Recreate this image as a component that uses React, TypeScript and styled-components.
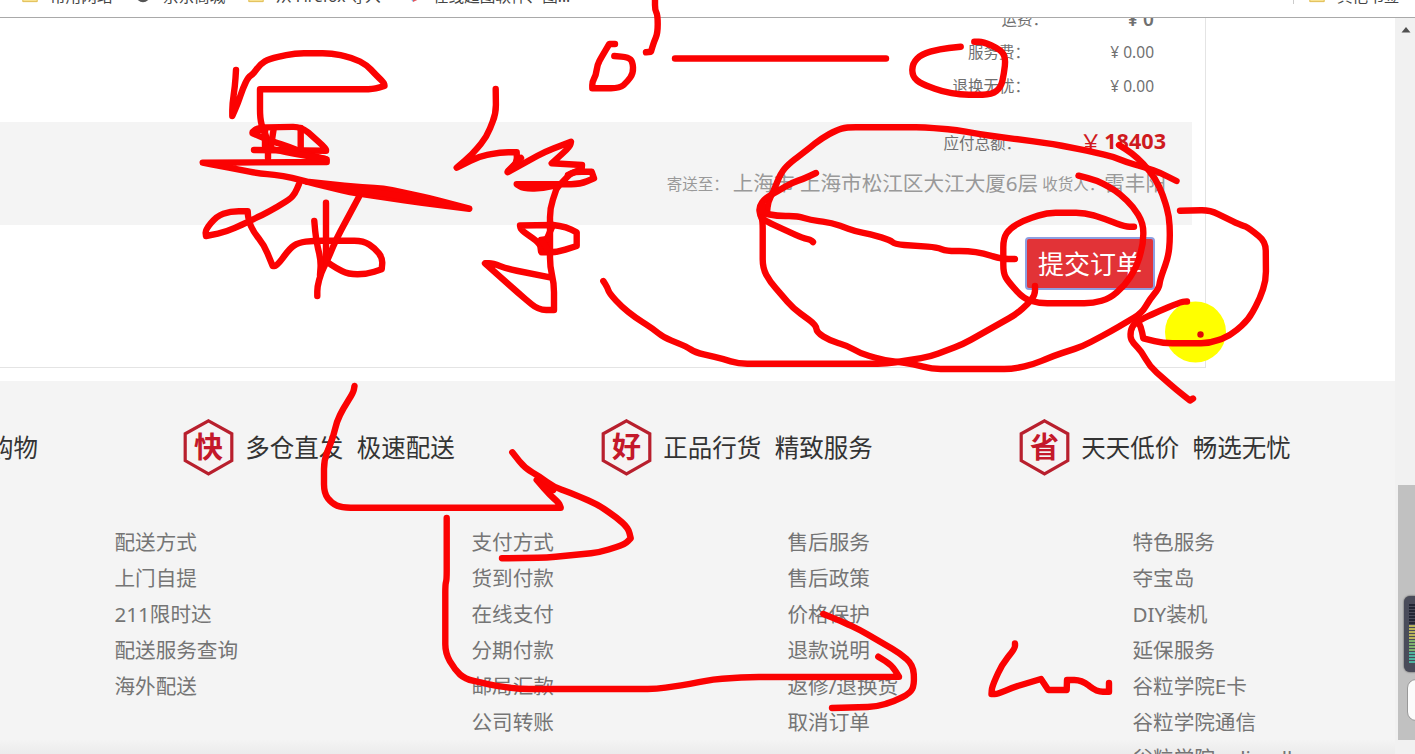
import React from 'react';
import styled, { createGlobalStyle } from 'styled-components';

const Global = createGlobalStyle`
  * { box-sizing: border-box; }
  body {
    margin: 0;
    overflow: hidden;
    background: #fff;
    font-family: 'Noto Sans', 'Noto Sans CJK SC', sans-serif;
    color: #707070;
  }
`;

const Screen = styled.div`
  position: relative;
  display: flex;
  flex-direction: column;
  width: 1415px;
  height: 754px;
  overflow: hidden;
`;

const BookmarkBar = styled.div`
  display: flex;
  align-items: flex-start;
  flex: none;
  height: 18px;
  border-bottom: 1px solid #a9a9a9;
  background: #fff;
`;

const Bookmark = styled.div<{ $start: number; $width: number }>`
  display: flex;
  flex: none;
  width: ${(p) => p.$width}px;
  margin-left: ${(p) => p.$start}px;
  margin-top: -14px;
  height: 20px;
  gap: 12px;
  font-size: 15.6px;
  line-height: 20px;
  color: #444;
  white-space: nowrap;
`;

const BookmarkIcon = styled.svg`
  flex: none;
  width: 16px;
  height: 19px;
  margin-top: -1px;
`;

const BarDivider = styled.i`
  width: 1px;
  height: 4px;
  margin-left: 724px;
  background: #ccc;
`;

const Viewport = styled.div`
  display: flex;
  flex: 1;
  min-height: 0;
`;

const Page = styled.main`
  display: flex;
  flex-direction: column;
  width: 1395px;
  overflow: hidden;
`;

const OrderCard = styled.section`
  flex: none;
  width: 1206px;
  height: 350px;
  margin-bottom: 13px;
  border-right: 1px solid #e4e4e4;
  border-bottom: 1px solid #e4e4e4;
`;

const FeeList = styled.div`
  display: flex;
  flex-direction: column;
  height: 104px;
  padding-right: 51px;
  overflow: hidden;
`;

const FeeRow = styled.div`
  display: flex;
  justify-content: flex-end;
  flex: none;
  height: 33.4px;
  font-size: 15.5px;
  line-height: 33.4px;

  &:first-child { margin-top: -15px; }
`;

const FeeValue = styled.span<{ $width?: number; $strong?: boolean }>`
  width: ${(p) => p.$width ?? 124}px;
  text-align: right;
  font-size: ${(p) => (p.$strong ? 19 : 15.5)}px;
  font-weight: ${(p) => (p.$strong ? 600 : 400)};
`;

const TotalBand = styled.div`
  display: flex;
  flex-direction: column;
  width: 1192px;
  height: 103px;
  padding: 0 26px 0 0;
  background: #f4f4f4;
`;

const TotalRow = styled.div`
  display: flex;
  justify-content: flex-end;
  height: 41px;
  line-height: 42px;
  font-size: 15.5px;
`;

const TotalAmount = styled.strong`
  display: flex;
  justify-content: flex-end;
  width: 145px;
  line-height: 38px;
  font-size: 21.6px;
  font-weight: 700;
  color: #cf1a1e;
`;

const Yen = styled.span`
  margin-right: 2px;
  font-family: 'Noto Sans CJK SC', sans-serif;
  font-size: 23px;
  font-weight: 400;
`;

const ShipRow = styled.div`
  display: flex;
  justify-content: flex-end;
  height: 40px;
  line-height: 40px;
  color: #999;
  white-space: nowrap;
`;

const ShipLabel = styled.span<{ $gap: number }>`
  margin-right: ${(p) => p.$gap}px;
  font-size: 15.5px;
  line-height: 42px;
`;

const ShipValue = styled.span<{ $gap?: number }>`
  margin-right: ${(p) => p.$gap ?? 0}px;
  font-size: 20.6px;
`;

const SubmitRow = styled.div`
  display: flex;
  justify-content: flex-end;
  padding: 12px 50px 0 0;
`;

const SubmitButton = styled.button`
  width: 130px;
  height: 53px;
  padding: 0 0 1px;
  border: 2px solid #8e9fe0;
  border-radius: 4px;
  background: #e23337;
  color: #fff;
  font-family: 'Noto Sans CJK SC', sans-serif;
  font-size: 26px;
  line-height: 48px;
`;

const Footer = styled.footer`
  flex: 1;
  background: linear-gradient(#f4f4f4 0 358px, #ececec 372px);
`;

const Features = styled.div`
  display: flex;
  height: 132px;
`;

const Feature = styled.div<{ $width: number }>`
  display: flex;
  align-items: center;
  justify-content: flex-start;
  flex: none;
  gap: 11px;
  width: ${(p) => p.$width}px;
  white-space: nowrap;
`;

const ClippedFeature = styled(Feature)`
  justify-content: flex-end;
  margin-right: 145.3px;
  overflow: hidden;
`;

const HexBadge = styled.svg`
  width: 51px;
  height: 57px;
  font-family: 'Noto Sans CJK SC', sans-serif;
`;

const FeatureText = styled.span`
  font-size: 24.5px;
  line-height: 30px;
  word-spacing: 7px;
  padding-top: 1px;
  color: #333;
`;

const LinkGrid = styled.div`
  display: grid;
  grid-template-columns: 357px 316px 345px 240px;
  padding: 11px 0 0 114.5px;
`;

const LinkColumn = styled.ul`
  margin: 0;
  padding: 0;
  list-style: none;
`;

const LinkItem = styled.li`
  height: 36px;
  font-size: 20.6px;
  line-height: 36px;
  color: #757575;
  white-space: nowrap;
`;

const ScrollTrack = styled.div`
  flex: none;
  width: 20px;
  padding: 8px 0 0 3px;
  background: #f1f1f1;
`;

const ScrollArrow = styled.svg`
  display: block;
  width: 16px;
  height: 8px;
`;

const ScrollThumb = styled.div`
  width: 17px;
  height: 255px;
  margin-top: 451px;
  background: #c1c1c1;
`;

const Ink = styled.svg`
  position: absolute;
  inset: 0;
  width: 1415px;
  height: 754px;
  pointer-events: none;
`;

const LevelMeter = styled.div`
  position: absolute;
  right: -5px;
  top: 596px;
  width: 16px;
  height: 76px;
  padding: 8px 0 0 5px;
  border-radius: 6px;
  background: #4a4c5a;
  box-shadow: 0 0 2px #333;
`;

const MeterBar = styled.i<{ $color: string }>`
  display: block;
  width: 6px;
  height: 2px;
  margin-bottom: 1px;
  background: ${(p) => p.$color};
`;

const FloatingTab = styled.div`
  position: absolute;
  right: -10px;
  top: 679px;
  width: 18px;
  height: 42px;
  border: 1px solid #999;
  border-radius: 9px;
  background: #fbfbfb;
`;

const FolderIcon = () => (
  <BookmarkIcon viewBox="0 0 16 20">
    <path d="M0 5h6l2 2h8v10.500H0z" fill="#f6dc80" />
    <path d="M.5 17.500V8h15v9.500z" fill="#f8e291" stroke="#dfbd55" />
  </BookmarkIcon>
);

const GlobeIcon = () => (
  <BookmarkIcon viewBox="0 0 16 20">
    <circle cx="8" cy="11" r="6" fill="none" stroke="#555" strokeWidth="2.500" />
  </BookmarkIcon>
);

const PinwheelIcon = () => (
  <BookmarkIcon viewBox="0 0 16 20">
    <path d="M1 9l7-6v15z" fill="#7db9e8" />
    <path d="M8 18l6-3-3-9-3 4z" fill="#e0555c" />
  </BookmarkIcon>
);

const Badge = ({ char }: { char: string }) => (
  <HexBadge viewBox="0 0 51 57">
    <path d="M25.500 1.800L48.800 14.800V41.600L25.500 54.800L2.200 41.600V14.800z" fill="#f6f3f3" stroke="#b81f2d" strokeWidth="3.200" />
    <text x="25.500" y="39" fontSize="29" fontWeight="700" textAnchor="middle" fill="#c4182a">{char}</text>
  </HexBadge>
);

const features = [
  { char: '快', text: '多仓直发 极速配送' },
  { char: '好', text: '正品行货 精致服务' },
  { char: '省', text: '天天低价 畅选无忧' },
];

const links = [
  ['配送方式', '上门自提', '211限时达', '配送服务查询', '海外配送'],
  ['支付方式', '货到付款', '在线支付', '分期付款', '邮局汇款', '公司转账'],
  ['售后服务', '售后政策', '价格保护', '退款说明', '返修/退换货', '取消订单'],
  ['特色服务', '夺宝岛', 'DIY装机', '延保服务', '谷粒学院E卡', '谷粒学院通信', '谷粒学院gulimall+'],
];

const meterColors = [
  ...Array(7).fill('#232634'),
  ...Array(5).fill('#b9b45c'),
  ...Array(4).fill('#7fb26e'),
  ...Array(4).fill('#4fb3a0'),
];

const strokes = [
  '236,70 235,86 232.3,104 232.3,116 238,103 243,88 248.3,77 253.3,74 260,64.3 269.3,58.7 295,53.3 331.7,53.3 353.3,58 366.7,65 375,74 384,82.7 384.5,86 373,89.3 260,89.3 260,118.3 263,130 268,140 268,158',
  '263,129 252.7,132 258,127.5 301.7,126.7 326,148.3 326,150.7 254,150',
  '252.7,133.3 268,140 290,147 306,154 326.7,159.3 326.7,162 202.7,162.7 220,166 258.3,173.3 283.3,175.7 306.7,181.7 350,192.3 413.3,201.7 469.3,208.7 430,198.3 383.3,188.3 353.3,186.7 306.7,181.7',
  '300.7,128 300.7,148',
  '273.5,130 271,146',
  '265,128 265,146',
  '325,159 285,152 268,148',
  '350,190 385,193.5 430,201.5',
  '299,184 295,193.3 290,199.3 270,211 250,221 226.7,231.7 206,236 205.3,230 216.7,216 230,211.3 247.7,211.3 248.3,220 253.3,231.7 264,245 272.7,266 276.7,266 290,248.3 298.3,242.7 313.3,240.7 363.3,240.7 375,248.3 382.7,258.3 381.7,269.3 366.7,274.3 348.3,274.3 336,268 326.7,261.7',
  '359,196.7 336.7,238.3 326.7,261.7 321,273 317.3,286.7 317.3,296',
  '326,202.7 326,260',
  '314.3,221 316,240 321,261 320,275',
  '495.7,89 496,113.3 486.7,136.7 471.7,155 456.7,167.7 478.3,156.7 500,152.3 516.7,152.3 517,163 507.7,172.3 545,151.7 571,141.7 570,146.7 551.7,163.3 582,165 581.7,169 568,175',
  '508,171 521,158',
  '556.7,188.3 568,176 573,171.7 591.7,171.7 594,178.3 580,184.3 516.7,184.3 523.3,188.5 543.3,188.5 563,183.3',
  '556.7,188.3 550,208.3 550,266.7 554,283.3 554,310 538.3,310 518.3,293 485,263.3 493,263.3 508,269 550,277.3',
  '545,243 553,225 520,225.5 521,230 540,243.3 541,251 548,251 548,240',
  '553,225 566,227 576.7,232.3 576.7,246 556.7,252.3 541.7,252.3 541,240 548,239',
  '543,242 547,249',
  '655,0 655,10 657.7,15 657.7,33.3 654,41.7 651,51.7 646,52.3',
  '615,44 609.3,44 601.7,56.7 597.3,65 596,75 592.3,81.7 592.3,88.3 620,88.3 627.3,81.7 633.3,73.3 632.7,61.7 628.3,57.3 614.3,56',
  '675,58.5 886,58.5',
  '960.7,46.7 940,49 921.7,54 912.3,63.3 912.3,76.7 921.7,84 943.3,91.7 960,94.7 991.7,94.7 1001,87.3 1004,73.3 1005.7,58.3 1001,50 983.3,41.7 974.3,41.7',
  '1176.5,181 1160,172.7 1146.7,168 1126.7,162.3 1113,156.7 1086.7,150.7 1053,144 1023,140 980,134.3 956.7,130 925,127.3 846.7,127.3 836.7,130 821.7,138.3 803.3,152.7 788.3,164.3 780.7,173.3 773.3,191.7 768,202 767,213',
  '816,173 803.3,179 791.7,182.7 776.7,191.7 765,198.3 759,206.7 760,215 762.7,220 762.7,268.3 770,281.7 793.3,308.3 816,325 816.7,332.3 830,340.7 848.3,346 860,353.3 883.3,360 913.3,364 931.7,369 1013.3,369 1033.3,364.3 1053.3,356 1083.3,346 1110,331.7 1141.7,313.3 1150,299 1159,288.3 1160,280 1168.3,256.7 1170,240 1169.3,216.7 1163,195 1155,178 1143,163.3 1131.7,153 1119,145',
  '762,204 763,213 776.7,216 798,216 810,220 831.7,222.7 856.7,231.7 870,234 890,240 895,244.3 936.7,247.3 946.7,251 968.3,251 983.3,253.3 1001.7,259 1015,259',
  '762,218 766.7,221.7 803.3,238.3 810,239.3 813,242',
  '603.3,281 607.3,287.3 609.3,293.3 621.7,306.7 635,317.3 653.3,329 663.3,337.3 686.7,346.7 695,352.3 723.3,359 738.3,363.7 886.7,363.7 930,356.7 963.3,344 1016.7,314 1028.3,303.3 1035,295 1035,286',
  '1134,226.7 1125,226.7 1105,219 1085,212.7 1046.7,212.7 1023.3,220.7 1010,228.3 1003.3,238.3 1003.3,273.3 1008.3,281.7 1023.3,298.3 1038.3,303.3 1093.3,303.3 1110,298.3 1125,285 1136.7,266.7 1143.3,243.3 1143.3,223.3 1133.3,206.7 1120,194 1110,187.3 1096.7,180.5 1078.5,175.7',
  '1180,210.7 1210,210 1240,225 1247,226.7 1265.7,241.7 1266,280 1260,298.3 1248.3,320 1230,335.7 1210,343.3 1163.3,343.3 1143.3,338.3 1141,326.7 1137,320',
  '1187,301.5 1181.7,301.7 1160,310.7 1140,320 1131.7,326 1130,336.7 1133,343 1141.7,351.7 1150,366.7 1176.7,390 1190,400.5 1193,398.5',
  '354.5,386 353.3,392.7 343.3,408.3 336.7,421.7 333.3,436.7 324,460 324,493.3 331.7,503.3 341.7,507.7 560.7,507.7 559,503 550,495 536.7,480 553.3,490',
  '512.3,452.3 525,468.3 540,476.7 553.3,486.7 571.7,493.3 596.7,504 616,517 628.3,528 630.7,538.3 625,544.3 600,552.3 546.7,557.7 502,558.3',
  '446.7,518 446.7,580 445.3,584 445.3,653.3 455,670 465,679 496.7,686 520,689 656.7,689 690,684 713.3,679.3 750,677 899,676.7 891.7,665 878.3,656.7',
  '823.3,614 840,620.7 860,630 900,653.3 913.3,665 914.3,685 910,693.3 895,701 876.7,706.7 832,708',
  '1015,643.5 1015,648.3 1001.7,665 992,686.7 991.5,694 998,694 1013.3,687.3 1041,679 1048.3,690 1066.7,690 1067,680 1081.7,680 1096.7,691.7 1109,691.7 1109,683',
];

// Rounds the gentle bends of a pen stroke and leaves its sharp corners alone.
const penPath = (source: string) => {
  const pts = source.split(' ').map((pair) => pair.split(',').map(Number));
  let d = `M${pts[0][0]} ${pts[0][1]}`;
  for (let i = 1; i < pts.length - 1; i += 1) {
    const [px, py] = pts[i - 1];
    const [x, y] = pts[i];
    const [nx, ny] = pts[i + 1];
    const inLen = Math.hypot(x - px, y - py);
    const outLen = Math.hypot(nx - x, ny - y);
    const cos = ((x - px) * (nx - x) + (y - py) * (ny - y)) / (inLen * outLen);
    if (cos < 0.6) {
      d += `L${x} ${y}`;
    } else {
      const a = Math.min(inLen / 2, 9) / inLen;
      const b = Math.min(outLen / 2, 9) / outLen;
      d += `L${x + (px - x) * a} ${y + (py - y) * a}Q${x} ${y} ${x + (nx - x) * b} ${y + (ny - y) * b}`;
    }
  }
  const [ex, ey] = pts[pts.length - 1];
  return `${d}L${ex} ${ey}`;
};

export default function App() {
  return (
    <Screen>
      <Global />
      <BookmarkBar>
        <Bookmark $start={22} $width={92}><FolderIcon />常用网站</Bookmark>
        <Bookmark $start={21} $width={92}><GlobeIcon />京东商城</Bookmark>
        <Bookmark $start={21} $width={138}><FolderIcon />从 Firefox 导入</Bookmark>
        <Bookmark $start={19} $width={164}><PinwheelIcon />在线超图软件、图...</Bookmark>
        <BarDivider />
        <Bookmark $start={15} $width={92}><FolderIcon />其他书签</Bookmark>
      </BookmarkBar>

      <Viewport>
        <Page>
          <OrderCard>
            <FeeList>
              <FeeRow>运费：<FeeValue $width={106} $strong>¥ 0</FeeValue></FeeRow>
              <FeeRow>服务费：<FeeValue>¥ 0.00</FeeValue></FeeRow>
              <FeeRow>退换无忧：<FeeValue>¥ 0.00</FeeValue></FeeRow>
            </FeeList>
            <TotalBand>
              <TotalRow>应付总额：<TotalAmount><Yen>￥</Yen>18403</TotalAmount></TotalRow>
              <ShipRow>
                <ShipLabel $gap={4}>寄送至：</ShipLabel>
                <ShipValue $gap={4}>上海市 上海市松江区大江大厦6层</ShipValue>
                <ShipLabel $gap={0}>收货人：</ShipLabel>
                <ShipValue>雷丰阳</ShipValue>
              </ShipRow>
            </TotalBand>
            <SubmitRow>
              <SubmitButton type="button">提交订单</SubmitButton>
            </SubmitRow>
          </OrderCard>

          <Footer>
            <Features>
              <ClippedFeature $width={38}><FeatureText>购物</FeatureText></ClippedFeature>
              {features.map((f) => (
                <Feature key={f.char} $width={418}>
                  <Badge char={f.char} />
                  <FeatureText>{f.text}</FeatureText>
                </Feature>
              ))}
            </Features>
            <LinkGrid>
              {links.map((column) => (
                <LinkColumn key={column[0]}>
                  {column.map((label) => <LinkItem key={label}>{label}</LinkItem>)}
                </LinkColumn>
              ))}
            </LinkGrid>
          </Footer>
        </Page>

        <ScrollTrack>
          <ScrollArrow viewBox="0 0 16 8"><path d="M3.500 6.500L8 1l4.500 5.500z" fill="#505050" /></ScrollArrow>
          <ScrollThumb />
        </ScrollTrack>
      </Viewport>

      <LevelMeter>
        {meterColors.map((color, i) => <MeterBar key={i} $color={color} />)}
      </LevelMeter>
      <FloatingTab />

      <Ink viewBox="0 0 1415 754">
        <circle cx="1195.500" cy="332" r="30.500" fill="#ffff00" />
        <g fill="none" stroke="#fb0202" strokeWidth="6.400" strokeLinecap="round" strokeLinejoin="round">
          {strokes.map((points) => <path key={points} d={penPath(points)} />)}
        </g>
        <circle cx="1200.500" cy="334.500" r="3.200" fill="#e00808" />
      </Ink>
    </Screen>
  );
}
